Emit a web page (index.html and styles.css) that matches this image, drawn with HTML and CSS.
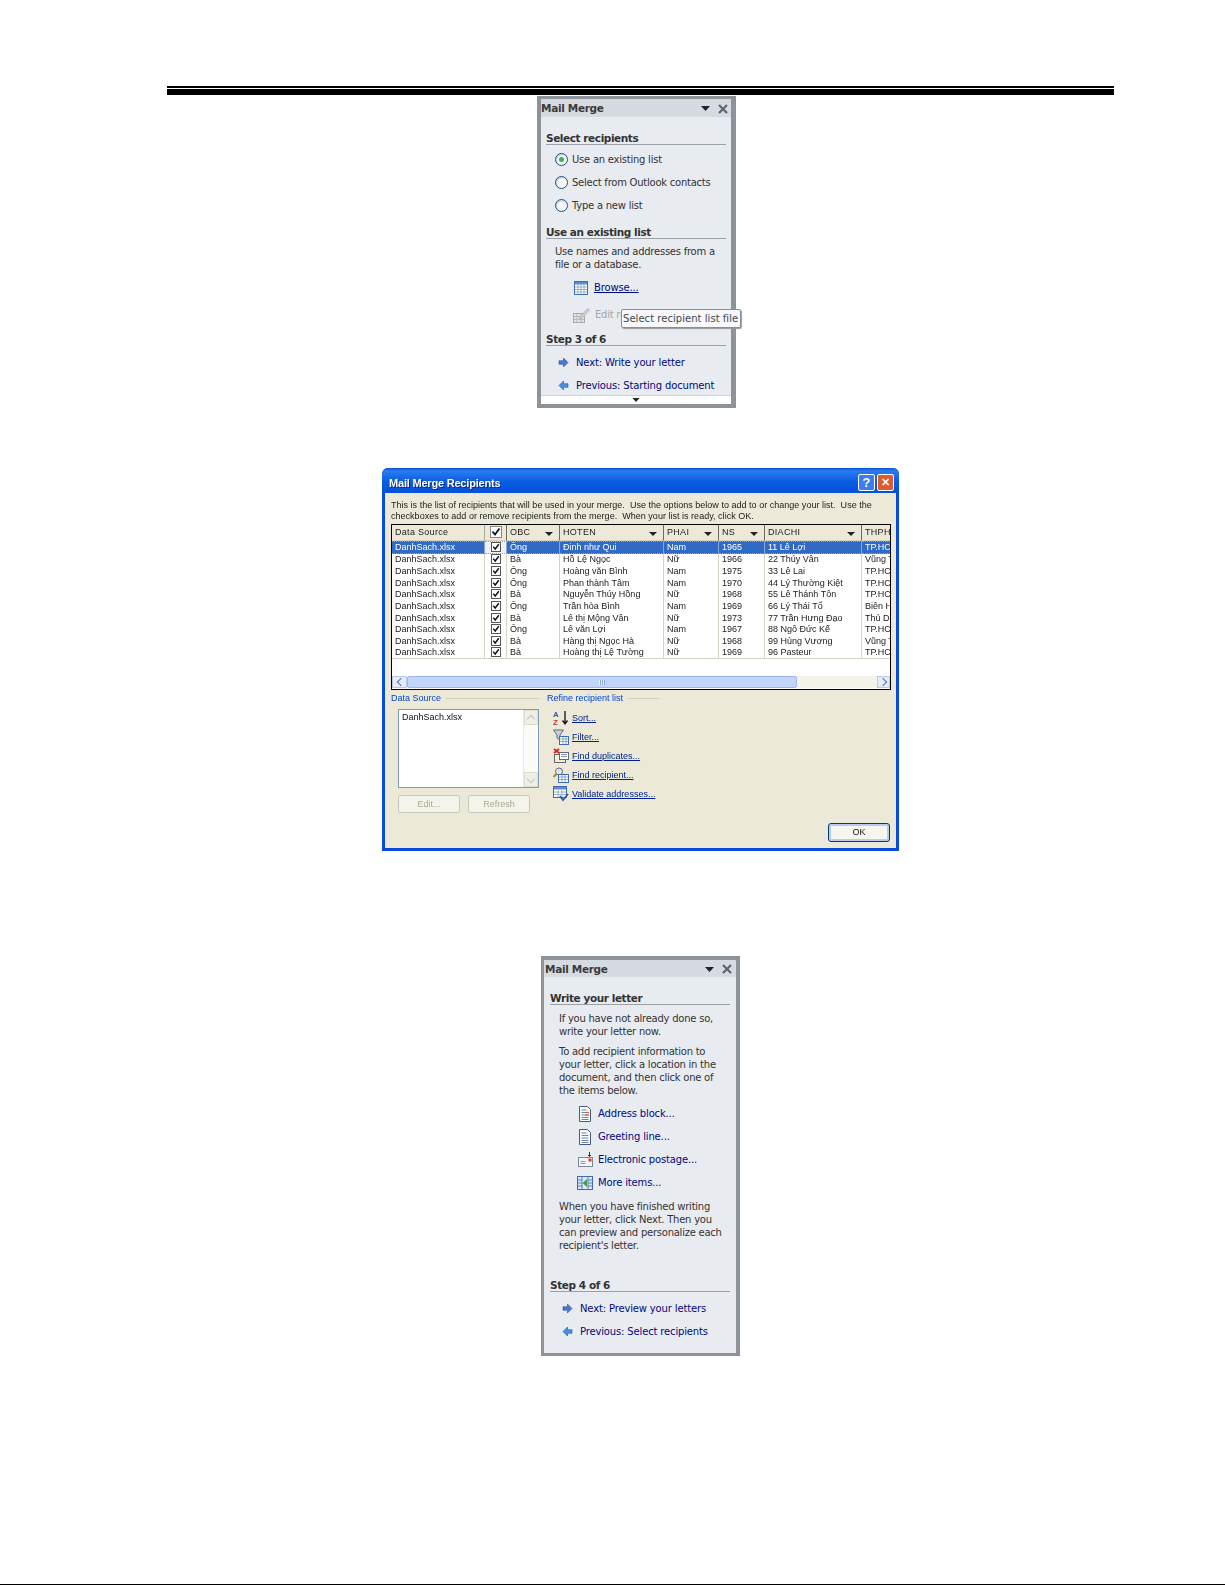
FILE: index.html
```html
<!DOCTYPE html>
<html lang="vi">
<head>
<meta charset="utf-8">
<title>Mail Merge</title>
<link rel="stylesheet" href="styles.css">
</head>
<body>
<svg class="defs" xmlns="http://www.w3.org/2000/svg">
  <symbol id="i-next" viewBox="0 0 12 10"><path d="M1 3h5V0l5 5-5 5V7H1z" fill="#4a78d8" stroke="#27458f" stroke-width=".6"/></symbol>
  <symbol id="i-prev" viewBox="0 0 12 10"><path d="M11 3H6V0L1 5l5 5V7h5z" fill="#4a90e0" stroke="#27458f" stroke-width=".6"/></symbol>
  <symbol id="i-check" viewBox="0 0 10 10"><path d="M1.500 4.500 4 7.500 8.500 1.500" fill="none" stroke="#111" stroke-width="1.800"/></symbol>
  <symbol id="i-sheet" viewBox="0 0 14 14"><rect x=".5" y=".5" width="13" height="13" fill="#fff" stroke="#3d6fb5"/><rect x="1" y="1" width="12" height="2.500" fill="#5b8fd0"/><path d="M1 6h12M1 8.500h12M1 11h12M4 3v10M7 3v10M10 3v10" stroke="#8aa0bd" stroke-width=".8"/></symbol>
  <symbol id="i-edit" viewBox="0 0 17 16"><rect x=".5" y="6.500" width="11" height="9" fill="#e4e4e4" stroke="#a9a9a9"/><path d="M1 9.500h10M1 12.500h10M4 7v8M8 7v8" stroke="#b8b8b8"/><path d="M7 10 14.500 1.500 16.500 3 9 11l-2.500 1z" fill="#cfcfcf" stroke="#a9a9a9" stroke-width=".7"/></symbol>
  <symbol id="i-doc" viewBox="0 0 12 16"><path d="M.5.5h8l3 3v12H.5z" fill="#f8fbff" stroke="#49597a"/><path d="M2.500 4h5M2.500 6.500h7M2.500 9h7M2.500 11.500h7M2.500 13.500h7" stroke="#6f86ac"/><path d="M6 6.500h4M6 9h4" stroke="#e0582a"/></symbol>
  <symbol id="i-plain" viewBox="0 0 12 16"><path d="M.5.5h8l3 3v12H.5z" fill="#f8fbff" stroke="#49597a"/><path d="M2.500 4h5M2.500 6.500h7M2.500 9h7M2.500 11.500h7M2.500 13.500h7" stroke="#6f86ac"/></symbol>
  <symbol id="i-post" viewBox="0 0 15 15"><rect x=".5" y="5.500" width="14" height="9" fill="#f4f6fa" stroke="#7a8699"/><path d="M2.500 9.500h5M2.500 11.500h5" stroke="#8b96a8"/><rect x="10.500" y="6.500" width="3" height="3" fill="#d8402a"/><path d="M11.500 0v4M10 3l1.500 1.500L13 3" fill="none" stroke="#18386f"/></symbol>
  <symbol id="i-more" viewBox="0 0 16 14"><rect x=".5" y=".5" width="15" height="13" fill="#dbe7f7" stroke="#3f6bb0"/><path d="M5 1v12M11 1v12M1 4h4M1 7h4M1 10h4M11 4h4M11 7h4M11 10h4" stroke="#3f6bb0" stroke-width=".8"/><path d="M10 3v8L5.500 7z" fill="#3da33d"/></symbol>
  <symbol id="i-sort" viewBox="0 0 16 16"><text x="0" y="7" class="svg-az">A</text><text x="0" y="15" class="svg-za">Z</text><path d="M12 1v12M9.500 10.500 12 14l2.500-3.500" fill="none" stroke="#111" stroke-width="1.300"/></symbol>
  <symbol id="i-filter" viewBox="0 0 16 16"><path d="M.5 1h10L7 6v5L4 9V6z" fill="#c9d2dc" stroke="#667"/><rect x="6.500" y="7.500" width="9" height="8" fill="#fff" stroke="#3f6bb0"/><path d="M7 10h8M7 12.500h8M10 8v7M13 8v7" stroke="#7a93b8" stroke-width=".8"/></symbol>
  <symbol id="i-dup" viewBox="0 0 16 16"><path d="M1 1l5 4M6 1 1 5" stroke="#d8241a" stroke-width="1.800"/><rect x="1.500" y="6.500" width="11" height="8" fill="#f7edc8" stroke="#667"/><rect x="6.500" y="4.500" width="9" height="7" fill="#fff" stroke="#667"/><path d="M8 6.500h6M8 8.500h6" stroke="#7a93b8"/></symbol>
  <symbol id="i-find" viewBox="0 0 16 16"><circle cx="6" cy="4.500" r="3.500" fill="#d8e8f7" stroke="#667"/><path d="M3.500 7 .5 10" stroke="#b8862a" stroke-width="2"/><rect x="5.500" y="7.500" width="10" height="8" fill="#fff" stroke="#3f6bb0"/><path d="M6 10h9M6 12.500h9M9 8v7M12 8v7" stroke="#7a93b8" stroke-width=".8"/></symbol>
  <symbol id="i-valid" viewBox="0 0 16 16"><rect x=".5" y=".5" width="13" height="11" fill="#fff" stroke="#3f6bb0"/><rect x="1" y="1" width="12" height="2.500" fill="#5b8fd0"/><path d="M1 6h12M1 8.500h12M5 4v7M9 4v7" stroke="#8aa0bd" stroke-width=".8"/><path d="M7 10l3 4 5-6" fill="none" stroke="#2b5fae" stroke-width="1.800"/></symbol>
  <symbol id="i-drop" viewBox="0 0 9 5"><path d="M0 0h9L4.500 5z" fill="#222"/></symbol>
  <symbol id="i-close" viewBox="0 0 10 10"><path d="M1 1l8 8M9 1 1 9" stroke="#5f646b" stroke-width="2.200"/></symbol>
</svg>

<div class="page">
  <div class="rule"></div>

  <section class="panel panel-a">
    <header class="panel-head"><span class="panel-title">Mail Merge</span><svg class="drop"><use href="#i-drop"/></svg><svg class="close"><use href="#i-close"/></svg></header>
    <div class="panel-body body-a">
      <h2 class="head h-first">Select recipients</h2>
      <div class="radios">
        <div class="row radio-row"><span class="radio on"></span>Use an existing list</div>
        <div class="row radio-row"><span class="radio"></span>Select from Outlook contacts</div>
        <div class="row radio-row"><span class="radio"></span>Type a new list</div>
      </div>
      <h2 class="head h-second">Use an existing list</h2>
      <p class="para para-a">Use names and addresses from a<br>file or a database.</p>
      <div class="row task browse"><svg class="ic14"><use href="#i-sheet"/></svg><a class="link under">Browse...</a></div>
      <div class="row task edit"><svg class="ic17"><use href="#i-edit"/></svg><span class="muted">Edit recipient list</span></div>
      <h2 class="head h-step">Step 3 of 6</h2>
      <div class="row nav first"><svg class="ic12"><use href="#i-next"/></svg><a class="link">Next: Write your letter</a></div>
      <div class="row nav"><svg class="ic12"><use href="#i-prev"/></svg><a class="link">Previous: Starting document</a></div>
    </div>
    <div class="more-bar"><svg class="more-arrow"><use href="#i-drop"/></svg></div>
    <div class="tooltip">Select recipient list file</div>
  </section>

  <section class="dialog">
    <header class="titlebar">
      <span class="title-text">Mail Merge Recipients</span>
      <span class="tb-btn tb-help">?</span>
      <span class="tb-btn tb-close">✕</span>
    </header>
    <div class="dlg-body">
      <p class="intro">This is the list of recipients that will be used in your merge.&nbsp; Use the options below to add to or change your list.&nbsp; Use the<br>checkboxes to add or remove recipients from the merge.&nbsp; When your list is ready, click OK.</p>
      <div class="grid-box">
        <table class="grid">
          <colgroup><col class="c1"><col class="c2"><col class="c3"><col class="c4"><col class="c5"><col class="c6"><col class="c7"><col class="c8"></colgroup>
          <thead>
            <tr>
              <th class="plain">Data Source</th>
              <th class="ck"><span class="cb"><svg><use href="#i-check"/></svg></span></th>
              <th class="sorted">OBC</th>
              <th class="sorted">HOTEN</th>
              <th class="sorted">PHAI</th>
              <th class="sorted">NS</th>
              <th class="sorted">DIACHI</th>
              <th>THPH</th>
            </tr>
          </thead>
          <tbody>
            <tr class="sel"><td>DanhSach.xlsx</td><td class="ck"><span class="cb"><svg><use href="#i-check"/></svg></span></td><td>Ông</td><td>Đinh như Qui</td><td>Nam</td><td>1965</td><td>11 Lê Lợi</td><td>TP.HCM</td></tr>
            <tr><td>DanhSach.xlsx</td><td class="ck"><span class="cb"><svg><use href="#i-check"/></svg></span></td><td>Bà</td><td>Hồ Lệ Ngọc</td><td>Nữ</td><td>1966</td><td>22 Thúy Vân</td><td>Vũng Tàu</td></tr>
            <tr><td>DanhSach.xlsx</td><td class="ck"><span class="cb"><svg><use href="#i-check"/></svg></span></td><td>Ông</td><td>Hoàng văn Bình</td><td>Nam</td><td>1975</td><td>33 Lê Lai</td><td>TP.HCM</td></tr>
            <tr><td>DanhSach.xlsx</td><td class="ck"><span class="cb"><svg><use href="#i-check"/></svg></span></td><td>Ông</td><td>Phan thành Tâm</td><td>Nam</td><td>1970</td><td>44 Lý Thường Kiệt</td><td>TP.HCM</td></tr>
            <tr><td>DanhSach.xlsx</td><td class="ck"><span class="cb"><svg><use href="#i-check"/></svg></span></td><td>Bà</td><td>Nguyễn Thúy Hồng</td><td>Nữ</td><td>1968</td><td>55 Lê Thánh Tôn</td><td>TP.HCM</td></tr>
            <tr><td>DanhSach.xlsx</td><td class="ck"><span class="cb"><svg><use href="#i-check"/></svg></span></td><td>Ông</td><td>Trần hòa Bình</td><td>Nam</td><td>1969</td><td>66 Lý Thái Tổ</td><td>Biên Hòa</td></tr>
            <tr><td>DanhSach.xlsx</td><td class="ck"><span class="cb"><svg><use href="#i-check"/></svg></span></td><td>Bà</td><td>Lê thị Mộng Vân</td><td>Nữ</td><td>1973</td><td>77 Trần Hưng Đạo</td><td>Thủ Dầu</td></tr>
            <tr><td>DanhSach.xlsx</td><td class="ck"><span class="cb"><svg><use href="#i-check"/></svg></span></td><td>Ông</td><td>Lê văn Lợi</td><td>Nam</td><td>1967</td><td>88 Ngô Đức Kế</td><td>TP.HCM</td></tr>
            <tr><td>DanhSach.xlsx</td><td class="ck"><span class="cb"><svg><use href="#i-check"/></svg></span></td><td>Bà</td><td>Hàng thị Ngọc Hà</td><td>Nữ</td><td>1968</td><td>99 Hùng Vương</td><td>Vũng Tàu</td></tr>
            <tr><td>DanhSach.xlsx</td><td class="ck"><span class="cb"><svg><use href="#i-check"/></svg></span></td><td>Bà</td><td>Hoàng thị Lệ Tường</td><td>Nữ</td><td>1969</td><td>96 Pasteur</td><td>TP.HCM</td></tr>
          </tbody>
        </table>
        <div class="hscroll">
          <span class="sb-btn sb-left"></span>
          <span class="sb-thumb"><span class="grip"></span></span>
          <span class="sb-track"></span>
          <span class="sb-btn sb-right"></span>
        </div>
      </div>
      <div class="lower">
        <div class="col-source">
          <div class="group-label">Data Source</div>
          <div class="listbox">
            <div class="list-item">DanhSach.xlsx</div>
            <div class="vscroll"><span class="vs-btn vs-up"></span><span class="vs-btn vs-down"></span></div>
          </div>
          <div class="btn-row"><span class="btn off">Edit...</span><span class="btn off">Refresh</span></div>
        </div>
        <div class="col-refine">
          <div class="group-label">Refine recipient list</div>
          <ul class="refine">
            <li><svg class="ic16"><use href="#i-sort"/></svg><a class="dlg-link">Sort...</a></li>
            <li><svg class="ic16"><use href="#i-filter"/></svg><a class="dlg-link">Filter...</a></li>
            <li><svg class="ic16"><use href="#i-dup"/></svg><a class="dlg-link">Find duplicates...</a></li>
            <li><svg class="ic16"><use href="#i-find"/></svg><a class="dlg-link">Find recipient...</a></li>
            <li><svg class="ic16"><use href="#i-valid"/></svg><a class="dlg-link">Validate addresses...</a></li>
          </ul>
        </div>
      </div>
      <div class="ok-row"><span class="btn ok">OK</span></div>
    </div>
  </section>

  <section class="panel panel-c">
    <header class="panel-head"><span class="panel-title">Mail Merge</span><svg class="drop"><use href="#i-drop"/></svg><svg class="close"><use href="#i-close"/></svg></header>
    <div class="panel-body body-c">
      <h2 class="head h-first">Write your letter</h2>
      <p class="para">If you have not already done so,<br>write your letter now.</p>
      <p class="para">To add recipient information to<br>your letter, click a location in the<br>document, and then click one of<br>the items below.</p>
      <div class="row task t-first"><svg class="ic-doc"><use href="#i-doc"/></svg><a class="link">Address block...</a></div>
      <div class="row task"><svg class="ic-doc"><use href="#i-plain"/></svg><a class="link">Greeting line...</a></div>
      <div class="row task"><svg class="ic-post"><use href="#i-post"/></svg><a class="link">Electronic postage...</a></div>
      <div class="row task"><svg class="ic-more"><use href="#i-more"/></svg><a class="link">More items...</a></div>
      <p class="para p-end">When you have finished writing<br>your letter, click Next. Then you<br>can preview and personalize each<br>recipient's letter.</p>
      <h2 class="head h-step4">Step 4 of 6</h2>
      <div class="row nav first"><svg class="ic12"><use href="#i-next"/></svg><a class="link">Next: Preview your letters</a></div>
      <div class="row nav"><svg class="ic12"><use href="#i-prev"/></svg><a class="link">Previous: Select recipients</a></div>
    </div>
  </section>

  <div class="foot"></div>
</div>
</body>
</html>
```
FILE: styles.css
```css
* { box-sizing: border-box; }
html, body { margin: 0; padding: 0; background: #fff; }
.defs { display: none; }
.svg-az { font: bold 8px "Liberation Sans", sans-serif; fill: #2b5fae; }
.svg-za { font: bold 8px "Liberation Sans", sans-serif; fill: #c0392b; }

.page {
  width: 1225px; height: 1585px; overflow: hidden;
  display: flex; flex-direction: column; align-items: flex-start;
  padding-top: 86px;
  font-family: "DejaVu Sans", sans-serif;
}
.rule {
  width: 947px; height: 9px; margin-left: 167px; flex: none;
  border-top: 2px solid #000; background: linear-gradient(#fff 1px, #000 1px);
}
.foot { margin-top: auto; width: 100%; height: 1px; background: #000; flex: none; }

/* Task panes */
.panel {
  position: relative; flex: none;
  border: solid #8d9399; background: #e8ecf1;
  color: #333; font-size: 10px; line-height: 13px; letter-spacing: -.24px;
}
.panel-a { width: 199px; height: 312px; margin-left: 537px; margin-top: 1px; border-width: 3px 5px 4px 4px; }
.panel-c { width: 199px; height: 400px; margin-left: 541px; margin-top: 105px; border-width: 4px 4px 3px 3px; }
.panel-head {
  height: 18px; background: #d6dbe1; display: flex; align-items: center;
  padding: 1px 0 0 0;
}
.panel-c .panel-head { height: 17px; padding-left: 1px; }
.panel-title { font-weight: 700; font-size: 10.5px; letter-spacing: -.32px; color: #3a3a3a; flex: 1; }
.drop { width: 9px; height: 5px; margin-right: 8px; }
.close { width: 10px; height: 10px; margin-right: 3px; }
.panel-c .close { margin-right: 4px; }
.panel-body { padding: 0 5px; overflow: hidden; }
.body-a { height: 278px; }
.body-c { padding: 0 6px; }
.head {
  margin: 0; height: 15px; border-bottom: 1px solid #9aa0a6;
  font-size: 10.5px; line-height: 16px; font-weight: 700; color: #333; letter-spacing: -.42px;
}
.h-first { margin-top: 13px; }
.h-second { margin-top: 7px; }
.h-step { margin-top: 5px; }
.h-step4 { margin-top: 25px; }
.radios { margin-top: 3px; }
.row { height: 23px; display: flex; align-items: center; white-space: nowrap; }
.radio-row { padding-left: 9px; }
.radio {
  width: 13px; height: 13px; border-radius: 50%; margin-right: 4px; flex: none;
  border: 1px solid #23507f; background: #f4f6f8; box-shadow: inset 1px 1px 1px #c4ccd4;
  display: flex; align-items: center; justify-content: center;
}
.radio.on::after { content: ""; width: 5px; height: 5px; border-radius: 50%; background: #3fb04a; }
.para { margin: 7px 0 0 9px; white-space: nowrap; }
.para-a { margin-top: 6px; }
.p-end { margin-top: 6px; }
.task { margin-left: 28px; }
.browse { margin-top: 5px; }
.edit { margin-top: 4px; margin-left: 27px; }
.t-first { margin-top: 5px; }
.ic14 { width: 14px; height: 14px; margin-right: 6px; flex: none; }
.ic17 { width: 17px; height: 16px; margin-right: 5px; flex: none; }
.ic-doc { width: 12px; height: 16px; margin-left: 1px; margin-right: 7px; flex: none; }
.ic-post { width: 15px; height: 15px; margin-right: 5px; flex: none; }
.ic-more { width: 16px; height: 14px; margin-left: -1px; margin-right: 5px; flex: none; }
.link { color: #000a80; letter-spacing: -.15px; }
.link.under { text-decoration: underline; }
.muted { color: #a3a6aa; }
.nav { margin-left: 12px; }
.nav.first { margin-top: 5px; }
.ic12 { width: 11px; height: 9px; margin-right: 7px; flex: none; }
.more-bar {
  height: 9px; background: #fff; display: flex; justify-content: center; align-items: center;
  border-top: 1px solid #cfd3d8;
}
.more-arrow { width: 8px; height: 4px; }
.tooltip {
  position: absolute; left: 80px; top: 210px; width: 120px; height: 19px;
  background: #f7f8fb; border: 1px solid #8a8f96; border-radius: 2px;
  box-shadow: 1px 1px 1px #9a9a9a;
  font-size: 10px; line-height: 18px; color: #44464c; padding-left: 1px; white-space: nowrap; letter-spacing: .04px;
}

/* Dialog */
.dialog {
  flex: none; width: 517px; height: 383px; margin-left: 382px; margin-top: 60px;
  background: #ece9d8; border: 3px solid #0a4bdc; border-top: 0; border-radius: 6px 6px 0 0;
  font-family: "Liberation Sans", sans-serif; font-size: 9px; color: #222;
  filter: blur(.3px);
}
.titlebar {
  height: 25px; margin: 0 -3px; padding: 4px 5px 0 7px; border-radius: 6px 6px 0 0;
  background: linear-gradient(#0a50d8, #2a7cf0 12%, #0a5ce4 55%, #0550d8);
  display: flex; align-items: center; color: #fff;
}
.title-text { flex: 1; font-weight: 700; font-size: 11px; letter-spacing: -.2px; text-shadow: 1px 1px 0 #0a2a80; }
.tb-btn {
  width: 17px; height: 17px; border: 1px solid #fff; border-radius: 2px; margin-left: 2px;
  display: flex; align-items: center; justify-content: center; font-size: 13px; font-weight: 700;
}
.tb-help { background: #3e7cf0; }
.tb-close { background: #e05a30; font-size: 11px; }
.dlg-body { padding: 7px 5px 0 6px; }
.intro { margin: 0; line-height: 11px; white-space: nowrap; letter-spacing: .02px; }
.grid-box {
  margin-top: 2px; width: 500px; height: 166px; border: 1px solid #000; background: #fff;
  display: flex; flex-direction: column; overflow: hidden;
}
.grid { width: 498px; table-layout: fixed; border-collapse: separate; border-spacing: 0; }
.c1 { width: 93px; } .c2 { width: 22px; } .c3 { width: 53px; } .c4 { width: 104px; }
.c5 { width: 55px; } .c6 { width: 46px; } .c7 { width: 97px; } .c8 { width: 28px; }
.grid th {
  height: 16px; padding: 0 3px 2px; background: #ece9d8; font-weight: 400; text-align: left;
  letter-spacing: .3px; border-right: 1px solid #6f6d62; border-bottom: 1px solid #d6d2c2;
  white-space: nowrap; overflow: hidden;
}
.grid th.plain { border-right-color: #aca899; }
.grid th:last-child { border-right: 0; }
.grid th.sorted { position: relative; }
.grid th.sorted::after {
  content: ""; position: absolute; right: 6px; top: 7px;
  border: 4px solid transparent; border-top-color: #222; border-bottom: 0;
}
.grid td {
  height: 11.65px; padding: 0 3px 1px; line-height: 10px; white-space: nowrap; overflow: hidden;
  border-right: 1px solid #d8d5c6;
}
.grid td:last-child { border-right: 0; }
.grid tbody tr:last-child td { border-bottom: 1px solid #d8d5c6; }
.grid th.ck, .grid td.ck { padding: 0 0 1px; text-align: center; }
.grid td.ck { line-height: 0; }
.cb {
  display: inline-block; width: 10px; height: 10px; border: 1px solid #555; background: #fff;
  vertical-align: middle;
}
.cb svg { display: block; width: 8px; height: 8px; }
.grid th .cb { width: 12px; height: 12px; border-color: #888; }
.grid th .cb svg { width: 10px; height: 10px; }
.sel td {
  background: #316ac5; color: #fff; border-right-color: #8aa6d8;
  border-top: 1px dotted #c9a227; border-bottom: 1px dotted #c9a227;
}
.sel td.ck { background: #eef1f5; }
.hscroll { margin-top: auto; height: 12px; display: flex; margin-bottom: 1px; }
.sb-btn {
  width: 15px; background: #e4ebfb; border: 1px solid #b8c8ee; flex: none;
  display: flex; align-items: center; justify-content: center;
}
.sb-btn::before {
  content: ""; width: 5px; height: 5px; border: solid #5d7195; border-width: 1.5px 0 0 1.5px;
}
.sb-left::before { transform: translateX(1px) rotate(-45deg); }
.sb-right { width: 13px; }
.sb-right::before { transform: translateX(-1px) rotate(135deg); }
.sb-thumb {
  width: 390px; background: #c3d5fb; border: 1px solid #9db6ec; border-radius: 2px; flex: none;
  display: flex; align-items: center; justify-content: center;
}
.grip { width: 6px; height: 5px; background: repeating-linear-gradient(90deg, #eaf1ff 0 1px, #8ca6da 1px 2px); }
.sb-track { flex: 1; background: #f4f3ea; }
.lower { display: flex; margin-top: 2px; }
.col-source { width: 156px; }
.col-refine { width: 112px; }
.group-label {
  color: #0046d5; line-height: 12px; height: 12px; white-space: nowrap;
  display: flex; align-items: center; gap: 5px;
}
.group-label::after { content: ""; flex: 1; height: 1px; background: #d0d0bf; }
.col-source .group-label { width: 148px; }
.listbox {
  margin: 5px 0 0 7px; width: 141px; height: 79px; border: 1px solid #7f9db9; background: #fff;
  display: flex; justify-content: space-between;
}
.list-item { padding: 1px 0 0 3px; line-height: 12px; color: #111; }
.vscroll { width: 15px; display: flex; flex-direction: column; justify-content: space-between; background: #fbfbf8; border-left: 1px solid #ece9d8; }
.vs-btn {
  height: 15px; background: #f0efe6; border: 1px solid #e0ddcf;
  display: flex; align-items: center; justify-content: center;
}
.vs-btn::before {
  content: ""; width: 5px; height: 5px; border: solid #c4c3b8; border-width: 1.5px 0 0 1.5px;
}
.vs-up::before { transform: translateY(1px) rotate(45deg); }
.vs-down::before { transform: translateY(-1px) rotate(225deg); }
.btn-row { display: flex; gap: 8px; margin: 7px 0 0 7px; }
.btn {
  width: 62px; height: 18px; padding-bottom: 1px; border: 1px solid #c9c7ba; border-radius: 3px; background: #f5f4ea;
  display: flex; align-items: center; justify-content: center;
}
.btn.off { color: #a9a795; }
.refine { list-style: none; margin: 4px 0 0 6px; padding: 0; }
.refine li { height: 19px; display: flex; align-items: center; white-space: nowrap; }
.ic16 { width: 16px; height: 16px; margin-right: 3px; flex: none; }
.dlg-link { color: #00228c; text-decoration: underline; }
.ok-row { display: flex; justify-content: flex-end; margin-top: 10px; padding-right: 1px; }
.btn.ok {
  height: 19px; background: #f6f5ee; border: 1px solid #003c74; border-radius: 3px;
  box-shadow: inset 0 0 0 2px #b6cdf2; color: #111;
}
```
